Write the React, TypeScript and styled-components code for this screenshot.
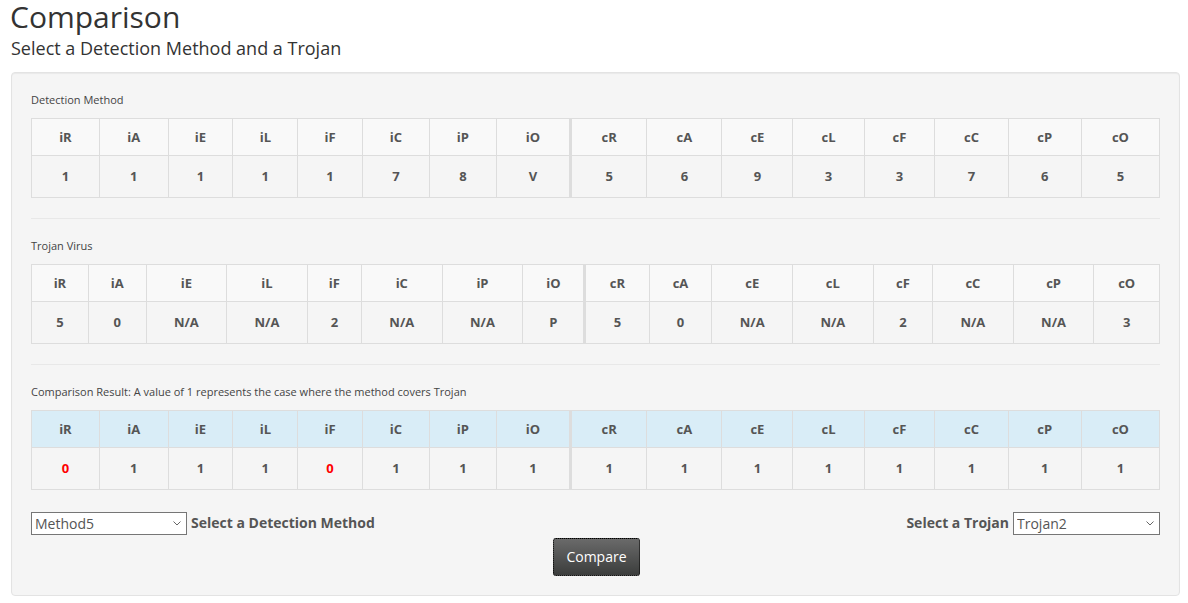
import styled, { createGlobalStyle } from 'styled-components';

const GlobalStyle = createGlobalStyle`
  html, body {
    margin: 0;
    padding: 0;
    background: #fff;
  }
  body {
    font-family: 'Open Sans', 'Liberation Sans', sans-serif;
    font-size: 14px;
    line-height: 1.42857;
    color: #333;
  }
`;

const columns = ['iR', 'iA', 'iE', 'iL', 'iF', 'iC', 'iP', 'iO', 'cR', 'cA', 'cE', 'cL', 'cF', 'cC', 'cP', 'cO'];

const methodValues = ['1', '1', '1', '1', '1', '7', '8', 'V', '5', '6', '9', '3', '3', '7', '6', '5'];
const trojanValues = ['5', '0', 'N/A', 'N/A', '2', 'N/A', 'N/A', 'P', '5', '0', 'N/A', 'N/A', '2', 'N/A', 'N/A', '3'];
const resultValues = ['0', '1', '1', '1', '0', '1', '1', '1', '1', '1', '1', '1', '1', '1', '1', '1'];

const Page = styled.div`
  padding: 0 8px 0 11px;
`;

const Title = styled.h1`
  margin: 0 0 0 -1px;
  font-size: 30px;
  font-weight: 400;
  line-height: 1.1;
  color: #333;
`;

const Subtitle = styled.h4`
  margin: 6px 0 13px 0;
  font-size: 18px;
  font-weight: 400;
  line-height: 1.1;
  color: #333;
`;

const Well = styled.div`
  background: #f5f5f5;
  border: 1px solid #e3e3e3;
  border-radius: 4px;
  box-shadow: inset 0 1px 1px rgba(0, 0, 0, 0.05);
  padding: 19px;
`;

const SectionLabel = styled.div`
  font-size: 11px;
  line-height: 16px;
  color: #444;
  margin: 0 0 10px 0;
`;

const Rule = styled.hr`
  border: 0;
  border-top: 1px solid #e8e8e8;
  margin: 20px 0 19px 0;
`;

const Table = styled.table`
  width: 100%;
  border-collapse: collapse;
  border-spacing: 0;
  border: 1px solid #ddd;
`;

const HeadRow = styled.tr<{ $info?: boolean }>`
  background: ${(p) => (p.$info ? '#d9edf7' : '#f9f9f9')};
`;

const Cell = styled.td<{ $split?: boolean; $head?: boolean; $alert?: boolean }>`
  border: 1px solid #ddd;
  ${(p) => (p.$split ? 'border-left: 3px solid #ddd;' : '')}
  height: ${(p) => (p.$head ? '36px' : '41px')};
  padding: 0 8px;
  text-align: center;
  vertical-align: middle;
  font-size: 13px;
  font-weight: 700;
  color: ${(p) => (p.$alert ? '#f00' : '#555')};
`;

const Controls = styled.div`
  margin-top: 22px;
  display: flex;
  justify-content: space-between;
  align-items: center;
`;

const Field = styled.div`
  display: flex;
  align-items: center;
  gap: 4px;
`;

const FieldLabel = styled.label`
  font-size: 14px;
  font-weight: 700;
  color: #555;
`;

const SelectBox = styled.div<{ $w: number }>`
  position: relative;
  width: ${(p) => p.$w}px;
  height: 23px;
`;

const Select = styled.select`
  display: block;
  appearance: none;
  -webkit-appearance: none;
  box-sizing: border-box;
  width: 100%;
  height: 100%;
  border: 1px solid #767676;
  border-radius: 0;
  background: #fff;
  font-family: 'Open Sans', 'Liberation Sans', sans-serif;
  font-size: 14px;
  color: #555;
  padding: 0 18px 0 3px;
  margin: 0;
`;

const Chevron = styled.svg`
  position: absolute;
  right: 6px;
  top: 9px;
  width: 8px;
  height: 5px;
  pointer-events: none;
`;

const ButtonRow = styled.div`
  display: flex;
  justify-content: center;
  margin-top: 3px;
`;

const CompareButton = styled.button`
  width: 87px;
  height: 38px;
  margin-left: 2px;
  border: 1px dotted #000;
  border-radius: 3px;
  background: linear-gradient(to bottom, #6a6a6a, #3b3d3c);
  color: #fff;
  font-family: 'Open Sans', 'Liberation Sans', sans-serif;
  font-size: 14px;
  cursor: pointer;
`;

const DataTable = ({ values, info }: { values: string[]; info?: boolean }) => (
  <Table>
    <tbody>
      <HeadRow $info={info}>
        {columns.map((c, i) => (
          <Cell as="th" key={c} $head $split={i === 8}>
            {c}
          </Cell>
        ))}
      </HeadRow>
      <tr>
        {values.map((v, i) => (
          <Cell key={i} $split={i === 8} $alert={info && v === '0'}>
            {v}
          </Cell>
        ))}
      </tr>
    </tbody>
  </Table>
);

const Dropdown = ({ width, value, options }: { width: number; value: string; options: string[] }) => (
  <SelectBox $w={width}>
    <Select defaultValue={value}>
      {options.map((o) => (
        <option key={o}>{o}</option>
      ))}
    </Select>
    <Chevron viewBox="0 0 8 5">
      <path d="M0.5 0.5 L4 4 L7.5 0.5" fill="none" stroke="#666" strokeWidth="1" />
    </Chevron>
  </SelectBox>
);

export default function App() {
  return (
    <Page>
      <GlobalStyle />
      <Title>Comparison</Title>
      <Subtitle>Select a Detection Method and a Trojan</Subtitle>
      <Well>
        <SectionLabel>Detection Method</SectionLabel>
        <DataTable values={methodValues} />
        <Rule />
        <SectionLabel>Trojan Virus</SectionLabel>
        <DataTable values={trojanValues} />
        <Rule />
        <SectionLabel>Comparison Result: A value of 1 represents the case where the method covers Trojan</SectionLabel>
        <DataTable values={resultValues} info />
        <Controls>
          <Field>
            <Dropdown width={156} value="Method5" options={['Method1', 'Method2', 'Method3', 'Method4', 'Method5', 'Method6']} />
            <FieldLabel>Select a Detection Method</FieldLabel>
          </Field>
          <Field>
            <FieldLabel>Select a Trojan</FieldLabel>
            <Dropdown width={147} value="Trojan2" options={['Trojan1', 'Trojan2', 'Trojan3', 'Trojan4']} />
          </Field>
        </Controls>
        <ButtonRow>
          <CompareButton>Compare</CompareButton>
        </ButtonRow>
      </Well>
    </Page>
  );
}
